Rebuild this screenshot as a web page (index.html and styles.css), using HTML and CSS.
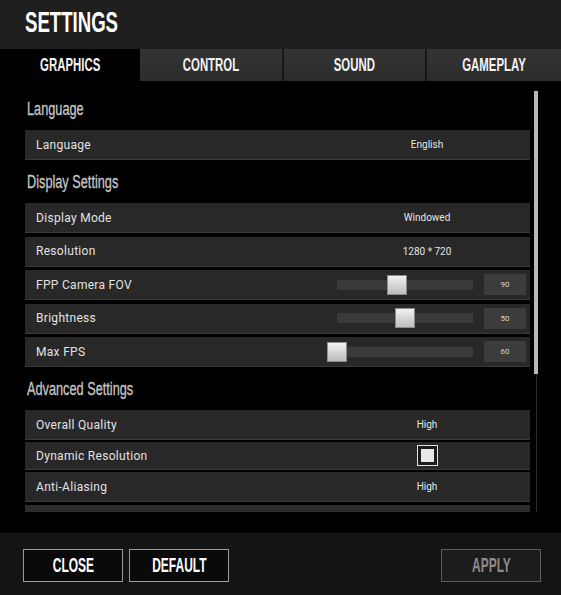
FILE: index.html
```html
<!DOCTYPE html>
<html lang="en">
<head>
<meta charset="utf-8">
<title>Settings</title>
<link rel="stylesheet" href="styles.css">
</head>
<body>
<div class="app">
  <header class="header">
    <h1 class="title"><span class="cond">SETTINGS</span></h1>
  </header>
  <nav class="tabs">
    <div class="tab active"><span class="cond">GRAPHICS</span></div>
    <div class="tab"><span class="cond">CONTROL</span></div>
    <div class="tab"><span class="cond">SOUND</span></div>
    <div class="tab"><span class="cond">GAMEPLAY</span></div>
  </nav>
  <main class="content">
    <div class="list">
      <h2 class="section"><span class="cond-r">Language</span></h2>
      <div class="group">
        <div class="row"><span class="label">Language</span><span class="val">English</span></div>
      </div>

      <h2 class="section"><span class="cond-r">Display Settings</span></h2>
      <div class="group">
        <div class="row"><span class="label">Display Mode</span><span class="val">Windowed</span></div>
        <div class="row"><span class="label">Resolution</span><span class="val">1280 * 720</span></div>
        <div class="row"><span class="label">FPP Camera FOV</span>
          <div class="slider"><div class="track"><div class="knob" style="left:44%"></div></div><div class="num">90</div></div>
        </div>
        <div class="row"><span class="label">Brightness</span>
          <div class="slider"><div class="track"><div class="knob" style="left:50%"></div></div><div class="num">50</div></div>
        </div>
        <div class="row"><span class="label">Max FPS</span>
          <div class="slider"><div class="track"><div class="knob" style="left:0%"></div></div><div class="num">60</div></div>
        </div>
      </div>

      <h2 class="section"><span class="cond-r">Advanced Settings</span></h2>
      <div class="group tight">
        <div class="row"><span class="label">Overall Quality</span><span class="val">High</span></div>
        <div class="row short"><span class="label">Dynamic Resolution</span><span class="val"><span class="check"><span class="check-in"></span></span></span></div>
        <div class="row"><span class="label">Anti-Aliasing</span><span class="val">High</span></div>
        <div class="row stub"></div>
      </div>
    </div>
    <div class="scrollbar"><div class="sb-thumb"></div><div class="sb-track"></div></div>
  </main>
  <footer class="footer">
    <button class="btn"><span class="cond-c">CLOSE</span></button>
    <button class="btn"><span class="cond-c">DEFAULT</span></button>
    <button class="btn disabled"><span class="cond-c">APPLY</span></button>
  </footer>
</div>
</body>
</html>
```
FILE: styles.css
```css
* { box-sizing: border-box; margin: 0; padding: 0; }
html, body { background: #000; }
body {
  width: 561px;
  height: 595px;
  overflow: hidden;
  font-family: Roboto, "Liberation Sans", sans-serif;
  color: #e2e2e2;
}
.app { width: 561px; height: 595px; display: flex; flex-direction: column; }

.header {
  height: 49px;
  background: #1f1f1f;
  padding: 5px 0 0 25px;
}
.title {
  font: 700 30px/1.117 "Liberation Sans", sans-serif;
  color: #fff;
}
.cond, .cond-c, .cond-r { display: inline-block; white-space: nowrap; }
.cond { transform: scaleX(0.62); transform-origin: left center; }
.cond-r { transform: scaleX(0.67); transform-origin: left center; }
.cond-c { transform: scaleX(0.6); transform-origin: center; }

.tabs {
  height: 32px;
  display: grid;
  grid-template-columns: 140px 142px 143px 1fr;
  background: #000;
}
.tab {
  display: flex;
  align-items: center;
  justify-content: center;
  background: linear-gradient(#343434, #2c2c2c);
  border-left: 2px solid #161616;
  font: 700 19px/1.117 "Liberation Sans", sans-serif;
  color: #f2f2f2;
}
.tab:nth-child(2) { border-left: 0; }
.tab .cond { transform-origin: center; transform: scaleX(0.6); }
.tab.active { background: #000; border-left: 0; }

.content {
  height: 452px;
  display: flex;
  align-items: flex-start;
  background: #000;
}
.list {
  width: 505px;
  height: 431px;
  margin-left: 25px;
  padding-top: 6px;
  overflow: hidden;
}
.section {
  height: 43px;
  display: flex;
  align-items: center;
  padding-left: 2px;
  font: 400 19px/1.117 "Liberation Sans", sans-serif;
  color: #c8c8c8;
  -webkit-text-stroke: 0.3px #c8c8c8;
}
.group { display: flex; flex-direction: column; gap: 3.5px; }
.group.tight { gap: 2.4px; }
.row {
  height: 30px;
  flex: none;
  display: flex;
  align-items: center;
  background: #282828;
  border-bottom: 1px solid #3a3a3a;
}
.row.short { height: 27.4px; }
.row.stub { background: linear-gradient(#2e2e2e, #262626); }
.label {
  flex: 1;
  padding-left: 11px;
  font-size: 12px;
  letter-spacing: 0.3px;
  color: #e2e2e2;
}
.val {
  width: 200px;
  margin-right: 3px;
  display: flex;
  justify-content: center;
  align-items: center;
  font-size: 10px;
  color: #e4e4e4;
}
.check {
  display: block;
  width: 21px;
  height: 21px;
  border: 1px solid #e2e2e2;
  padding: 3px;
  background: #1c1c1c;
}
.check-in { display: block; width: 13px; height: 13px; background: #e8e8e8; }

.slider { display: flex; align-items: center; margin-right: 4px; }
.track {
  position: relative;
  width: 136px;
  height: 10px;
  background: #3a3a3a;
  margin-right: 11px;
}
.knob {
  position: absolute;
  top: 50%;
  width: 20px;
  height: 20px;
  margin: -10px 0 0 -10px;
  background: linear-gradient(#f2f2f2, #bcbcbc);
  border: 1px solid #8c8c8c;
}
.num {
  width: 42px;
  height: 21px;
  background: #3c3c3c;
  display: flex;
  align-items: center;
  justify-content: center;
  font-size: 8px;
  color: #d6d6d6;
}

.scrollbar {
  width: 4px;
  height: 431px;
  margin-left: 4px;
  padding-top: 10px;
  display: flex;
  flex-direction: column;
}
.sb-thumb { height: 283px; background: #b8b8b8; flex: none; }
.sb-track { flex: 1; width: 1px; margin-left: 2px; background: #2c2c2c; }

.footer {
  height: 62px;
  background: #141414;
  display: flex;
  align-items: flex-start;
  gap: 6px;
  padding: 16px 20px 0 23px;
}
.btn {
  width: 100px;
  height: 33px;
  border: 1px solid #9b9b9b;
  background: #0a0a0a;
  color: #fff;
  display: flex;
  align-items: center;
  justify-content: center;
  font: 700 20px/1.117 "Liberation Sans", sans-serif;
}
.btn.disabled {
  margin-left: auto;
  border-color: #5c5c5c;
  background: #1c1c1c;
  color: #8c8c8c;
}
```
